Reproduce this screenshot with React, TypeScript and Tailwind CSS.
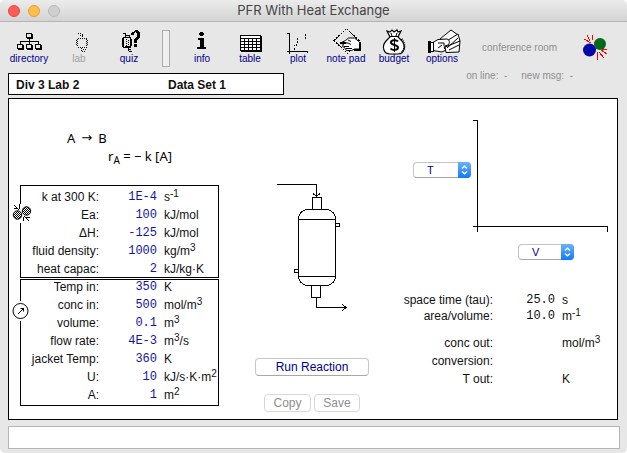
import React from "react";

type Unit = { base: string; sup?: string; tail?: string };
type Field = { id: string; label: string; value: string; unit: Unit };

const reactionFields: Field[] = [
  { id: "k", label: "k at 300 K:", value: "1E-4", unit: { base: "s", sup: "-1" } },
  { id: "ea", label: "Ea:", value: "100", unit: { base: "kJ/mol" } },
  { id: "dh", label: "ΔH:", value: "-125", unit: { base: "kJ/mol" } },
  { id: "density", label: "fluid density:", value: "1000", unit: { base: "kg/m", sup: "3" } },
  { id: "capacity", label: "heat capac:", value: "2", unit: { base: "kJ/kg·K" } },
];

const operatingFields: Field[] = [
  { id: "tin", label: "Temp in:", value: "350", unit: { base: "K" } },
  { id: "cin", label: "conc in:", value: "500", unit: { base: "mol/m", sup: "3" } },
  { id: "volume", label: "volume:", value: "0.1", unit: { base: "m", sup: "3" } },
  { id: "flow", label: "flow rate:", value: "4E-3", unit: { base: "m", sup: "3", tail: "/s" } },
  { id: "jacket", label: "jacket Temp:", value: "360", unit: { base: "K" } },
  { id: "u", label: "U:", value: "10", unit: { base: "kJ/s·K·m", sup: "2" } },
  { id: "a", label: "A:", value: "1", unit: { base: "m", sup: "2" } },
];

function UnitText({ unit }: { unit: Unit }) {
  return (
    <span className="ml-[7px] whitespace-nowrap">
      {unit.base}
      {unit.sup && <sup className="-top-1 text-[10px]">{unit.sup}</sup>}
      {unit.tail}
    </span>
  );
}

function FieldRow({ field }: { field: Field }) {
  return (
    <div className="flex h-[18px] items-center leading-[18px]">
      <label htmlFor={field.id} className="w-[78px] shrink-0 text-right whitespace-nowrap">
        {field.label}
      </label>
      <input
        id={field.id}
        defaultValue={field.value}
        className="h-[18px] w-[58px] shrink-0 bg-transparent text-right font-['Liberation_Mono',monospace] text-[12px] leading-[18px] text-[#1414a0] outline-none"
      />
      <UnitText unit={field.unit} />
    </div>
  );
}

function Art({ children }: { children: React.ReactNode }) {
  return (
    <svg
      aria-hidden="true"
      width="48"
      height="25"
      viewBox="0 0 48 25"
      className="overflow-visible"
      fill="none"
      stroke="#000"
      shapeRendering="crispEdges"
    >
      {children}
    </svg>
  );
}

const DirectoryArt = () => (
  <Art>
    <path d="M24.500 11v6M15.500 17v-3.500h18v3.500" />
    {[
      [21, 5],
      [12, 16],
      [21, 16],
      [30, 16],
    ].map(([x, y]) => (
      <g key={`${x}-${y}`}>
        <rect x={x + 0.5} y={y + 0.5} width="5" height="4" fill="#e7e7e7" />
        <path d={`M${x + 1} ${y + 5.5}h6M${x + 6.5} ${y + 1}v5`} />
      </g>
    ))}
  </Art>
);

const LabArt = () => (
  <Art>
    <g stroke="#111" strokeDasharray="1 1">
      <path d="M23 5.500h4M25 7.500h4M27.500 6v4M23 10.500h9M22.500 11v8M31.500 11v8M23 19.500h9" />
      <path d="M21.500 12v6M32.500 12v6M26.500 20v4M28 21.500h4M27 23.500h4" />
    </g>
  </Art>
);

const QuizArt = () => (
  <Art>
    <path d="M18 5.500h3M20 7.500h4M20.500 6v4M24.500 7v3M18 9.500h8M17.500 10v9M18.500 10v9M25.500 10v9M26.500 11v7M18 19.500h8M23 20v3M23 21.500h3M24 23.500h3M20 18.500h5" />
    <path d="M21.500 11v7M23.500 12v6" strokeDasharray="1 1" />
    <path
      d="M27 4h2v-1h1v-1h3v1h1v1h1v6h-1v1h-1v1h-1v3h-3v-4h1v-1h1v-1h1v-4h-1v-1h-1v1h-1v2h-3v-2h1zM29 16h3v3h-3z"
      fill="#000"
      stroke="none"
    />
  </Art>
);

const InfoArt = () => (
  <Art>
    <path stroke="none" fill="#000" d="M22 4h3v1h1v2h-1v1h-3v-1h-1v-2h1zM20 10h6v9h2v2h-9v-2h3v-7h-2z" />
  </Art>
);

const TableArt = () => (
  <Art>
    <rect x="14.500" y="7.500" width="20" height="15" fill="#fff" />
    <path d="M15 10.500h19M15 13.500h19M15 16.500h19M15 19.500h19M18.500 11v12M22.500 11v12M26.500 11v12M30.500 11v12" />
    <path d="M15 23.500h21M35.500 8v16" />
  </Art>
);

const PlotArt = () => (
  <Art>
    <path d="M13 5.500h2M15.500 5v21M13 23.500h20M33.500 23v2M20.500 20v2M20.500 17v1M22.500 16v2M23.500 13v2M23.500 10v2M31.500 9v2M31.500 6v2" />
  </Art>
);

const NotePadArt = () => (
  <Art>
    <path d="M12 12.500L24.500 .500L37 12.500L25.500 25.500z" strokeDasharray="2 1" />
    <g shapeRendering="auto">
      <path d="M18.500 15l5-2.500 3-2.500h6l5 4v7h-5l-3 1.500h-5l-2-3-2-1 1-2z" fill="#fff" />
      <path d="M19 15h7l3 1.500M26 12l3 1.500M22 18.500h5M24 20.500h6" />
      <path d="M18 15h6" strokeWidth="2" />
    </g>
    <path d="M38 14v8M32 22h7" strokeWidth="2" />
  </Art>
);

const BudgetArt = () => (
  <Art>
    <g shapeRendering="auto">
      <path
        d="M20 9L17 3l3 1 2-2 2 2 3-2 1 2 3-1-3 6 4 4c5 7 1 13-4 13h-8c-6 0-9-7-4-13z"
        fill="#fff"
        strokeWidth="1.200"
      />
      <path d="M19 8.500h10M21 5l1 3M27 5l-1 3" />
      <path d="M31.500 11c5 6 3 12-2 15" strokeDasharray="1 1" strokeWidth="2" />
      <path d="M28 13.500c-1-1.500-7-2-7 1s7 2 7 5-6 3-7.500 1" strokeWidth="2" />
    </g>
    <path d="M24.500 10v14" />
  </Art>
);

const OptionsArt = () => (
  <Art>
    <g shapeRendering="auto">
      <path d="M22 11l11-9 7 5-9 12z" fill="#fff" />
      <path d="M27 14l13-8 2 7-12 10z" fill="#fff" />
      <path d="M27 19l15-6-1 11-13 .500z" fill="#fff" />
      <path d="M15 14.500l5-3 9-.500c3 1 3 4 1 6l-3 1-1 2 2 2-4 2-9-1.500z" fill="#fff" />
      <path d="M20 15h6v3M24 17l-4 3M29 20l11-10M31 22l10-5" />
    </g>
    <rect x="11.500" y="14.500" width="4" height="9" fill="#fff" />
    <path d="M11.500 13v12" strokeWidth="3" />
  </Art>
);

type Tool = { label: string; art: React.ReactNode; disabled?: boolean };

const labTools: Tool[] = [
  { label: "directory", art: <DirectoryArt /> },
  { label: "lab", art: <LabArt />, disabled: true },
  { label: "quiz", art: <QuizArt /> },
];

const viewTools: Tool[] = [
  { label: "info", art: <InfoArt /> },
  { label: "table", art: <TableArt /> },
  { label: "plot", art: <PlotArt /> },
  { label: "note pad", art: <NotePadArt /> },
  { label: "budget", art: <BudgetArt /> },
  { label: "options", art: <OptionsArt /> },
];

function ToolButton({ tool }: { tool: Tool }) {
  return (
    <button
      type="button"
      disabled={tool.disabled}
      className="flex w-12 shrink-0 flex-col items-center text-[10px] leading-3 text-[#00008f] disabled:text-[#a0a0a0]"
    >
      {tool.art}
      <span className="whitespace-nowrap">{tool.label}</span>
    </button>
  );
}

function TitleBar() {
  return (
    <header className="flex h-[22px] items-center border-b border-[#b4b4b4] bg-linear-to-b from-[#ececec] to-[#d3d3d3] px-2">
      <div className="flex flex-1 gap-2">
        <button type="button" aria-label="Close" className="size-3 rounded-full border border-[#e2463f] bg-[#ff5c56]" />
        <button type="button" aria-label="Minimize" className="size-3 rounded-full border border-[#e0a033] bg-[#ffbd4a]" />
        <button type="button" aria-label="Zoom" disabled className="size-3 rounded-full border border-[#b8b8b8] bg-[#cfcfcf]" />
      </div>
      <h1 className="font-[Inter,sans-serif] text-[13px] text-[#444]">PFR With Heat Exchange</h1>
      <div className="flex-1" />
    </header>
  );
}

function Messenger() {
  return (
    <div className="flex text-[10px] leading-3 text-[#8e8e8e]">
      <div className="flex flex-col items-center pt-5">
        <span>conference room</span>
        <div className="mt-4 flex gap-3.5 whitespace-nowrap">
          <span>on line:&nbsp; -</span>
          <span>new msg:&nbsp; -</span>
        </div>
      </div>
      <svg aria-hidden="true" width="26" height="28" viewBox="0 0 26 28" className="mt-3 ml-2.5">
        <circle cx="17" cy="10" r="6" fill="#006b1b" />
        <circle cx="6.500" cy="16" r="6.500" fill="#0008a8" />
        <path
          d="M4 1l3 6M9 1l1 5M1 5l7 4M14 18l1 8M16 18l5 6M18 16l6 4M19 15h5M11 8l1 2"
          stroke="#f00"
          fill="none"
          shapeRendering="crispEdges"
        />
      </svg>
    </div>
  );
}

function VariableSelect({ label, options, className }: { label: string; options: string[]; className: string }) {
  return (
    <div className={`relative h-4 shrink-0 ${className}`}>
      <select
        aria-label={label}
        className="block h-4 w-full appearance-none rounded-[4px] border border-[#c4c4c4] border-b-[#a6a6a6] bg-white pl-[13px] text-[11px] leading-[14px] text-[#00008f]"
      >
        {options.map((o) => (
          <option key={o}>{o}</option>
        ))}
      </select>
      <span className="pointer-events-none absolute inset-y-0 right-0 flex w-[13px] items-center justify-center rounded-r-[4px] bg-linear-to-b from-[#66b2fa] to-[#0a78fb]">
        <svg aria-hidden="true" width="7" height="10" viewBox="0 0 7 10" fill="none" stroke="#fff" strokeWidth="1.300">
          <path d="M1 3.500L3.500 1.200L6 3.500M1 6.500L3.500 8.800L6 6.500" />
        </svg>
      </span>
    </div>
  );
}

function Reactor() {
  return (
    <svg
      role="img"
      aria-label="Plug flow reactor"
      width="70"
      height="129"
      viewBox="0 0 70 129"
      fill="none"
      stroke="#000"
      shapeRendering="crispEdges"
    >
      <path d="M0 1.500h39.500v11M36 10.500l3.500 3l3.500 -3" />
      <rect x="35.500" y="14.500" width="9" height="12" />
      <path d="M29.500 26.500h21q7 2 8 8v60q-1 6 -8 8h-21q-7 -2 -8 -8v-60q1 -6 8 -8z" />
      <path d="M22 36.500h36M22 93.500h36" />
      <path d="M58.500 40.500h4v3h-4M21.500 86.500h-4v3h4" />
      <rect x="34.500" y="102.500" width="9" height="12" />
      <path d="M39.500 115v9.500h29M65 121l4 3.500l-4 3.500" />
    </svg>
  );
}

function CollisionBadge() {
  return (
    <svg
      aria-hidden="true"
      width="20"
      height="19"
      viewBox="0 0 20 19"
      className="absolute top-[18px] -left-[9px] bg-white"
      stroke="#000"
    >
      <defs>
        <pattern id="weave" width="2" height="2" patternUnits="userSpaceOnUse">
          <rect width="2" height="2" fill="#fff" stroke="none" />
          <rect width="1" height="1" fill="#000" stroke="none" />
          <rect x="1" y="1" width="1" height="1" fill="#000" stroke="none" />
        </pattern>
      </defs>
      <circle cx="5.500" cy="11" r="4.200" fill="url(#weave)" />
      <circle cx="14.500" cy="7" r="4.200" fill="url(#weave)" />
      <path d="M2 1l5 5M7.500 0v5M2 4h4M11.500 13v4M12 12l5 5M14 13h4" fill="none" shapeRendering="crispEdges" />
    </svg>
  );
}

function GaugeBadge() {
  return (
    <svg
      aria-hidden="true"
      width="18"
      height="20"
      viewBox="0 0 18 20"
      className="absolute top-[21px] -left-[10px] bg-white"
      fill="none"
      stroke="#000"
    >
      <circle cx="9.500" cy="10" r="7.500" />
      <path d="M7 13L13 7M9.500 7.500h3v3" />
    </svg>
  );
}

type Result = { label: string; value: string; unit?: Unit };

function ResultRow({ result, className }: { result: Result; className: string }) {
  return (
    <div className={`flex items-center ${className}`}>
      <dt className="flex w-[90px] shrink-0 justify-end whitespace-nowrap">{result.label}</dt>
      <dd className="flex items-center">
        <span className="w-[62px] text-right font-['Liberation_Mono',monospace] text-[12px]">{result.value}</span>
        {result.unit && <UnitText unit={result.unit} />}
      </dd>
    </div>
  );
}

const ratios: Result[] = [
  { label: "space time (tau):", value: "25.0", unit: { base: "s" } },
  { label: "area/volume:", value: "10.0", unit: { base: "m", sup: "-1" } },
];

const outputs: Result[] = [
  { label: "conc out:", value: "", unit: { base: "mol/m", sup: "3" } },
  { label: "conversion:", value: "" },
  { label: "T out:", value: "", unit: { base: "K" } },
];

export default function App() {
  return (
    <div className="overflow-hidden rounded-[5px] bg-[#e7e7e7] pb-1 font-['Liberation_Sans',Arial,sans-serif] text-[12px] text-[#111]">
      <TitleBar />

      <div className="flex justify-between pr-[18px]">
        <div>
          <nav aria-label="Tools" className="flex h-[51px] pt-1.5 pl-[5px]">
            <div className="flex gap-0.5">
              {labTools.map((t) => (
                <ToolButton key={t.label} tool={t} />
              ))}
            </div>
            <div className="mr-2 mt-0.5 ml-[9px] h-[37px] w-2 shrink-0 border border-[#ababab] bg-[#efefef]" />
            <div className="flex">
              {viewTools.map((t) => (
                <ToolButton key={t.label} tool={t} />
              ))}
            </div>
          </nav>
          <div className="ml-2 flex h-[22px] w-[276px] items-center border border-black bg-white pt-0.5 pl-[7px] font-bold">
            <span className="w-[152px]">Div 3 Lab 2</span>
            <span>Data Set 1</span>
          </div>
        </div>
        <Messenger />
      </div>

      <main className="mt-[3px] mr-[9px] ml-2 flex border border-black bg-white">
        <section aria-label="Conditions" className="w-[210px] shrink-0 pt-[30px] pb-[13px] pl-[11px]">
          <div className="pl-[47px] font-['Noto_Sans',sans-serif] text-[13px] leading-[18px] text-black">
            <p className="flex gap-1.5">
              <span>A</span>
              <span className="font-['DejaVu_Sans',sans-serif]">→</span>
              <span>B</span>
            </p>
            <p className="pl-[41px] whitespace-nowrap">
              r<sub className="text-[10px]">A</sub> = − k [A]
            </p>
          </div>
          <div className="relative mt-5 border border-black pt-0.5">
            <div className="-mb-px">
              {reactionFields.map((f) => (
                <FieldRow key={f.id} field={f} />
              ))}
            </div>
            <CollisionBadge />
          </div>
          <div className="relative mt-px border border-black pb-px">
            <div className="-mt-0.5">
              {operatingFields.map((f) => (
                <FieldRow key={f.id} field={f} />
              ))}
            </div>
            <GaugeBadge />
          </div>
        </section>

        <section aria-label="Reactor" className="flex flex-1 flex-col items-center pt-[84px] pl-0.5">
          <Reactor />
          <button
            type="button"
            className="mt-[46px] h-[18px] w-[114px] rounded-[4px] border border-[#c8c8c8] border-b-[#a8a8a8] text-[12px] leading-4 text-[#00008f]"
          >
            Run Reaction
          </button>
          <div className="mt-[18px] flex gap-[3px] text-[12px] leading-4">
            <button type="button" disabled className="h-[18px] w-[47px] rounded-[4px] border border-[#d8d8d8] text-[#8e8e8e]">
              Copy
            </button>
            <button type="button" disabled className="h-[18px] w-[46px] rounded-[4px] border border-[#d8d8d8] text-[#8e8e8e]">
              Save
            </button>
          </div>
        </section>

        <section aria-label="Results" className="w-[214px] shrink-0 pt-[21px]">
          <div className="flex gap-0.5 pl-2.5">
            <VariableSelect label="Vertical axis" options={["T", "V"]} className="mt-[42px] w-[58px]" />
            <svg
              role="img"
              aria-label="Empty plot"
              width="136"
              height="112"
              viewBox="0 0 136 112"
              fill="none"
              stroke="#000"
              shapeRendering="crispEdges"
            >
              <path d="M0 .500h4.500v111M0 106.500h134.500v5" />
            </svg>
          </div>
          <div className="mt-3 pl-[115px]">
            <VariableSelect label="Horizontal axis" options={["V", "T"]} className="w-[56px]" />
          </div>
          <dl className="mt-8">
            {ratios.map((r) => (
              <ResultRow key={r.label} result={r} className="h-4 leading-4" />
            ))}
            <div className="mt-2.5">
              {outputs.map((r) => (
                <ResultRow key={r.label} result={r} className="h-[18px] leading-[18px]" />
              ))}
            </div>
          </dl>
        </section>
      </main>

      <div className="mt-1.5 mr-[7px] ml-2">
        <input aria-label="Message" className="block h-[23px] w-full border border-[#b4b4b4] bg-white px-1 outline-none" />
      </div>
    </div>
  );
}
